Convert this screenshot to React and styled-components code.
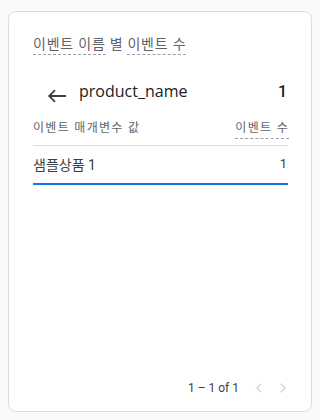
import React from "react";
import styled, { createGlobalStyle } from "styled-components";

const Global = createGlobalStyle`
  html, body { margin: 0; padding: 0; background: #f8f9fa; }
  body { font-family: Roboto, "Noto Sans CJK KR", "Noto Sans", sans-serif; }
`;

const Page = styled.div`
  padding: 11px 8px 8px 8px;
`;

const Card = styled.div`
  box-sizing: border-box;
  width: 304px;
  height: 401px;
  background: #fff;
  border: 1px solid #dadce0;
  border-radius: 8px;
  padding: 22px 23px 0 24px;
  display: flex;
  flex-direction: column;
`;

const Title = styled.div`
  font-size: 14px;
  letter-spacing: 0.8px;
  color: #5f6368;
  line-height: 20px;
  display: flex;
  align-items: flex-start;
  gap: 4px;
`;

const Dashed = styled.span`
  display: inline-block;
  border-bottom: 1px dashed #9aa0a6;
`;

const DrillRow = styled.div`
  display: flex;
  align-items: flex-start;
  margin-top: 29px;
  height: 24px;
`;

const BackButton = styled.span`
  width: 22px;
  height: 24px;
  margin-left: 13px;
  margin-right: 11px;
  display: flex;
  align-items: center;
  justify-content: center;
  color: #3c4043;
`;

const DrillName = styled.span`
  flex: 1;
  font-family: "Open Sans", Roboto, sans-serif;
  font-size: 16px;
  line-height: 16px;
  font-weight: 400;
  color: #202124;
  margin-top: -1px;
`;

const DrillValue = styled.span`
  font-size: 16px;
  line-height: 16px;
  font-weight: 500;
  color: #202124;
  margin-right: 1px;
`;

const HeadRow = styled.div`
  display: flex;
  justify-content: space-between;
  align-items: flex-start;
  margin-top: 12px;
  padding-bottom: 6px;
  border-bottom: 1px solid #dadce0;
  font-size: 12px;
  letter-spacing: 1.3px;
  color: #5f6368;
  line-height: 16px;
`;

const HeadRight = styled.span`
  display: inline-block;
  padding-bottom: 2px;
  margin-right: -1px;
  border-bottom: 1px dashed #9aa0a6;
`;

const DataRow = styled.div`
  display: flex;
  justify-content: space-between;
  align-items: center;
  height: 35px;
  padding-bottom: 2px;
  border-bottom: 2px solid #1a73e8;
  font-size: 14px;
  color: #3c4043;
`;

const RowValue = styled.span`
  font-size: 13px;
  margin-right: 1px;
`;

const Spacer = styled.div`
  flex: 1;
`;

const Footer = styled.div`
  display: flex;
  align-items: center;
  justify-content: flex-end;
  height: 46px;
  margin-right: -7px;
  font-size: 12px;
  color: #3c4043;
`;

const PageInfo = styled.span`
  margin-right: 8px;
`;

const Chevron = styled.span`
  width: 24px;
  height: 24px;
  display: flex;
  align-items: center;
  justify-content: center;
  color: #dadce0;
`;

export default function App() {
  return (
    <>
      <Global />
      <Page>
        <Card>
          <Title>
            <Dashed>이벤트 이름</Dashed>
            <span>별</span>
            <Dashed>이벤트 수</Dashed>
          </Title>
          <DrillRow>
            <BackButton>
              <svg width="20" height="16" viewBox="0 0 20 16">
                <path d="M19 8H2.5M8 2.2L2.2 8L8 13.8" fill="none" stroke="currentColor" strokeWidth="1.8" />
              </svg>
            </BackButton>
            <DrillName>product_name</DrillName>
            <DrillValue>1</DrillValue>
          </DrillRow>
          <HeadRow>
            <span>이벤트 매개변수 값</span>
            <HeadRight>이벤트 수</HeadRight>
          </HeadRow>
          <DataRow>
            <span>샘플상품 1</span>
            <RowValue>1</RowValue>
          </DataRow>
          <Spacer />
          <Footer>
            <PageInfo>1 – 1 of 1</PageInfo>
            <Chevron>
              <svg width="20" height="20" viewBox="0 0 24 24">
                <path d="M15.41 7.41L14 6l-6 6 6 6 1.41-1.41L10.83 12z" fill="currentColor" />
              </svg>
            </Chevron>
            <Chevron>
              <svg width="20" height="20" viewBox="0 0 24 24">
                <path d="M10 6L8.59 7.41 13.17 12l-4.58 4.59L10 18l6-6z" fill="currentColor" />
              </svg>
            </Chevron>
          </Footer>
        </Card>
      </Page>
    </>
  );
}
